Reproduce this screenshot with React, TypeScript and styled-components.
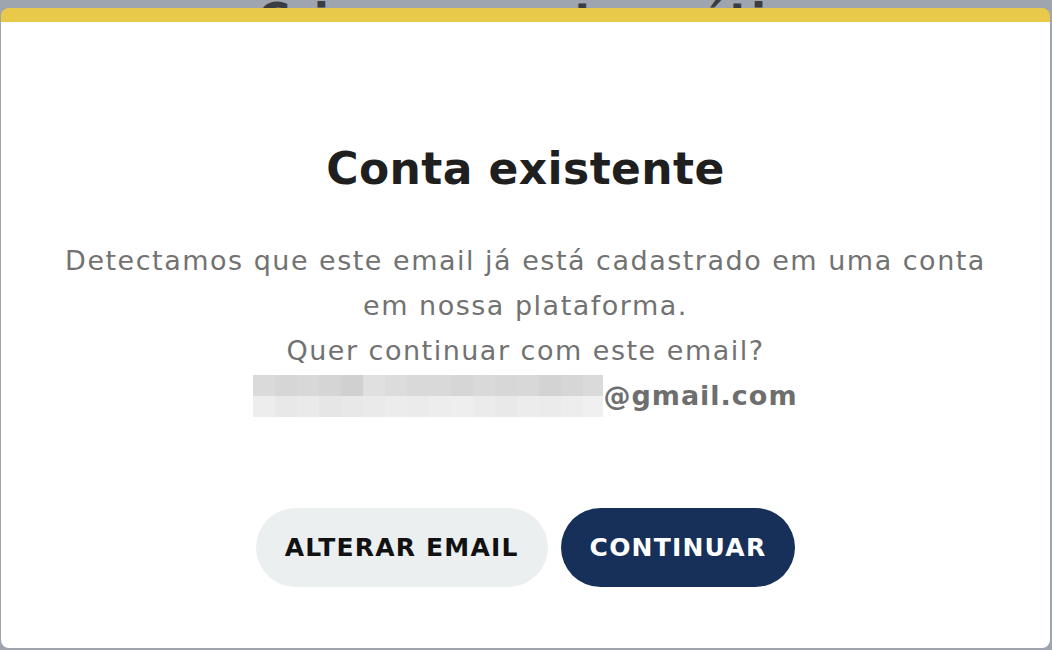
import { createGlobalStyle } from "styled-components";
import styled from "styled-components";

const GlobalStyle = createGlobalStyle`
  html, body {
    margin: 0;
    padding: 0;
    height: 100%;
  }
  body {
    background: #9ea5af;
    font-family: "DejaVu Sans", "Liberation Sans", sans-serif;
    overflow: hidden;
  }
`;

// page behind the overlay
const Page = styled.div`
  height: 650px;
  display: flex;
  flex-direction: column;
  align-items: center;
`;

const PageTitle = styled.h1`
  margin: -6px 0 0;
  font-size: 44px;
  font-weight: 700;
  color: #3a3d42;
  letter-spacing: 1px;
`;

const Overlay = styled.div`
  position: fixed;
  inset: 8px 2px 2px 1px;
`;

const Modal = styled.div`
  height: 100%;
  box-sizing: border-box;
  background: #ffffff;
  border-radius: 8px;
  border-top: 14px solid #e9c94a;
  display: flex;
  flex-direction: column;
  align-items: center;
  padding-top: 121px;
`;

const Title = styled.h2`
  margin: 0;
  font-size: 44px;
  font-weight: 700;
  color: #1f1f1f;
  letter-spacing: 0.4px;
`;

const Message = styled.div`
  margin-top: 44px;
  text-align: center;
  font-size: 27px;
  line-height: 45px;
  letter-spacing: 1.5px;
  color: #727272;
  max-width: 1000px;
`;

const EmailLine = styled.div`
  display: flex;
  justify-content: center;
  align-items: center;
  font-weight: 700;
  color: #6e6e6e;
  letter-spacing: 1px;
`;

const Blur = styled.span`
  display: grid;
  grid-template-columns: repeat(16, 22px);
  grid-template-rows: 21px 21px;
  width: 350px;
  overflow: hidden;
`;

const Cell = styled.span<{ $c: string }>`
  background: ${({ $c }) => $c};
`;

const Actions = styled.div`
  margin-top: 90px;
  display: flex;
  gap: 13px;
`;

const Button = styled.button<{ $primary?: boolean }>`
  height: 79px;
  padding: 0 29px;
  border: none;
  border-radius: 40px;
  font-family: "DejaVu Sans", "Liberation Sans", sans-serif;
  font-size: 25px;
  font-weight: 700;
  letter-spacing: 1.2px;
  text-transform: uppercase;
  cursor: pointer;
  background: ${({ $primary }) => ($primary ? "#16305a" : "#eceff0")};
  color: ${({ $primary }) => ($primary ? "#ffffff" : "#111111")};
`;

const topRow = [
  "#dadada", "#d6d6d6", "#d8d8d8", "#d5d5d5", "#d0d0d0", "#e0e0e0",
  "#dcdcdc", "#d9d9d9", "#d9d9d9", "#d6d6d6", "#d9d9d9", "#d7d7d7",
  "#d8d8d8", "#d3d3d3", "#d6d6d6", "#dadada",
];
const bottomRow = [
  "#ededed", "#e8e8e8", "#eaeaea", "#e6e6e6", "#e8e8e8", "#eaeaea",
  "#ececec", "#ebebeb", "#ededed", "#eeeeee", "#ebebeb", "#e9e9e9",
  "#ececec", "#ebebeb", "#ededed", "#f0f0f0",
];

export default function App() {
  return (
    <>
      <GlobalStyle />
      <Page>
        <PageTitle>Crie sua conta grátis</PageTitle>
      </Page>
      <Overlay>
        <Modal role="dialog">
          <Title>Conta existente</Title>
          <Message>
            Detectamos que este email já está cadastrado em uma conta
            <br />
            em nossa plataforma.
            <br />
            Quer continuar com este email?
            <EmailLine>
              <Blur>
                {topRow.map((c, i) => (
                  <Cell key={"t" + i} $c={c} />
                ))}
                {bottomRow.map((c, i) => (
                  <Cell key={"b" + i} $c={c} />
                ))}
              </Blur>
              <span>@gmail.com</span>
            </EmailLine>
          </Message>
          <Actions>
            <Button>Alterar email</Button>
            <Button $primary>Continuar</Button>
          </Actions>
        </Modal>
      </Overlay>
    </>
  );
}
